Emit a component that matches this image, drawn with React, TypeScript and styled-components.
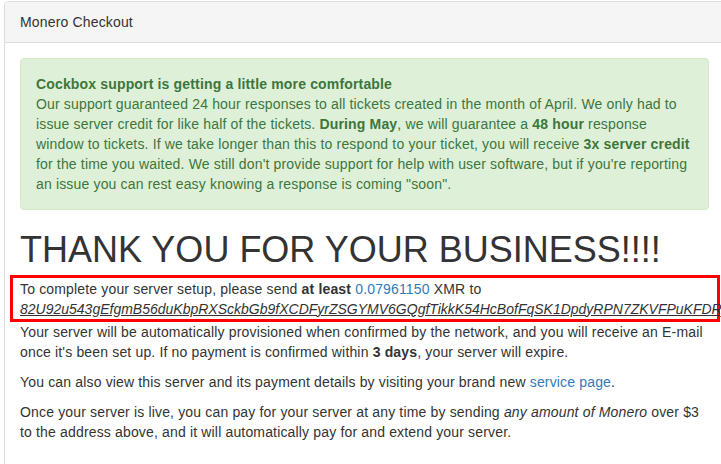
import React from 'react'
import styled, { createGlobalStyle } from 'styled-components'

const GlobalStyle = createGlobalStyle`
  html, body {
    margin: 0;
    padding: 0;
    background: #fff;
    overflow: hidden;
  }
  body {
    font-family: "Liberation Sans", Arial, Helvetica, sans-serif;
    font-size: 14px;
    line-height: 20px;
    letter-spacing: 0.16px;
    color: #333;
  }
`

const Panel = styled.div`
  margin: 1px 0 0 4px;
  width: 719px;
  border: 1px solid #ddd;
  border-radius: 4px;
  background: #fff;
  box-shadow: 0 1px 1px rgba(0, 0, 0, 0.05);
`

const PanelHeading = styled.div`
  padding: 10px 15px;
  background: #f5f5f5;
  border-bottom: 1px solid #ddd;
  border-radius: 3px 3px 0 0;
  color: #333;
`

const PanelBody = styled.div`
  padding: 15px;
`

const Alert = styled.div`
  padding: 15px;
  margin-bottom: 20px;
  border: 1px solid #d6e9c6;
  border-radius: 4px;
  background: #dff0d8;
  color: #3c763d;
`

const Title = styled.h1`
  margin: 20px 0 5px;
  font-size: 36px;
  font-weight: 500;
  line-height: 1.1;
  letter-spacing: 0;
  color: #333;
`

const PaymentBox = styled.div`
  margin: 0 -11px 0 -10px;
  padding: 1px 7px 0;
  border: 3px solid #f00;
`

const Address = styled.span`
  font-style: italic;
  text-decoration: underline;
  white-space: nowrap;
  letter-spacing: 0;
`

const Para = styled.p`
  margin: 0 0 10px;
`

const Link = styled.a`
  color: #337ab7;
  text-decoration: none;
`

export default function App() {
  return (
    <>
      <GlobalStyle />
      <Panel>
        <PanelHeading>Monero Checkout</PanelHeading>
        <PanelBody>
          <Alert>
            <b>Cockbox support is getting a little more comfortable</b>
            <br />
            Our support guaranteed 24 hour responses to all tickets created in the month of April. We
            only had to issue server credit for like half of the tickets. <b>During May</b>, we will
            guarantee a <b>48 hour</b> response window to tickets. If we take longer than this to
            respond to your ticket, you will receive <b>3x server credit</b> for the time you waited.
            We still don't provide support for help with user software, but if you're reporting an
            issue you can rest easy knowing a response is coming "soon".
          </Alert>
          <Title>THANK YOU FOR YOUR BUSINESS!!!!</Title>
          <PaymentBox>
            To complete your server setup, please send <b>at least</b>{' '}
            <Link href="#">0.07961150</Link> XMR to{' '}
            <Address>82U92u543gEfgmB56duKbpRXSckbGb9fXCDFyrZSGYMV6GQgfTikkK54HcBofFqSK1DpdyRPN7ZKVFPuKFDRj7mQ3sB2xW5</Address>
          </PaymentBox>
          <Para>
            Your server will be automatically provisioned when confirmed by the network, and you will
            receive an E-mail once it's been set up. If no payment is confirmed within <b>3 days</b>,
            your server will expire.
          </Para>
          <Para>
            You can also view this server and its payment details by visiting your brand new{' '}
            <Link href="#">service page</Link>.
          </Para>
          <Para>
            Once your server is live, you can pay for your server at any time by sending{' '}
            <i>any amount of Monero</i> over $3 to the address above, and it will automatically pay
            for and extend your server.
          </Para>
        </PanelBody>
      </Panel>
    </>
  )
}
